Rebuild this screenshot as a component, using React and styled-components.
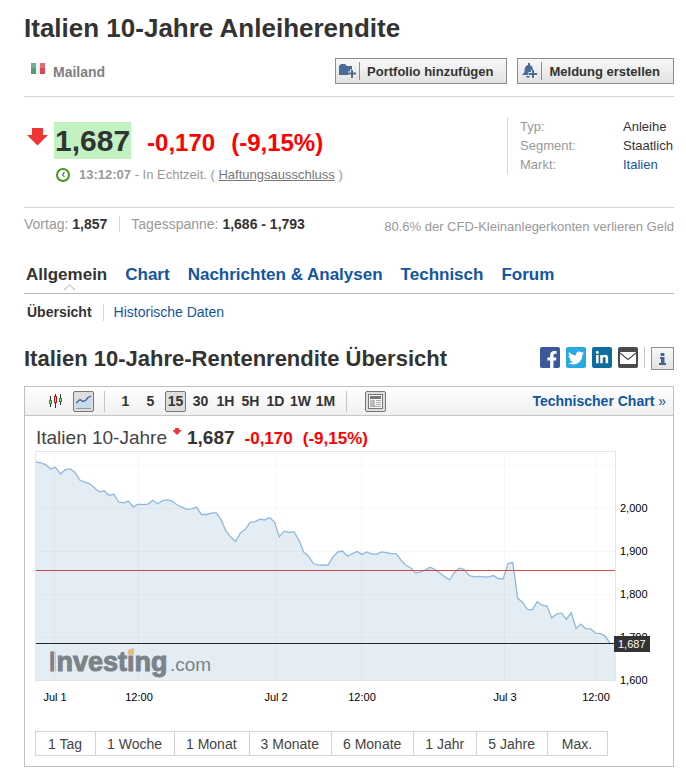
import React, { useState } from 'react'
import styled, { createGlobalStyle } from 'styled-components'
import { FaFacebookF, FaTwitter, FaLinkedinIn } from 'react-icons/fa'

const intervals = ['1', '5', '15', '30', '1H', '5H', '1D', '1W', '1M']
const ranges = ['1 Tag', '1 Woche', '1 Monat', '3 Monate', '6 Monate', '1 Jahr', '5 Jahre', 'Max.']
const tabs = ['Allgemein', 'Chart', 'Nachrichten & Analysen', 'Technisch', 'Forum']

// yields in thousandths
const prices = [
  2107, 2105, 2101, 2091, 2095, 2079, 2089, 2091, 2083, 2065, 2060, 2057, 2047, 2037, 2040,
  2029, 2032, 2014, 2012, 2016, 2002, 2009, 2008, 2009, 2018, 2010, 2017, 2019, 2016, 2007,
  2002, 1997, 1998, 2002, 1985, 1985, 1988, 1989, 1974, 1947, 1933, 1922, 1942, 1950, 1967,
  1968, 1974, 1972, 1978, 1968, 1933, 1946, 1943, 1945, 1926, 1898, 1888, 1871, 1867, 1868,
  1867, 1885, 1898, 1900, 1888, 1894, 1899, 1892, 1898, 1893, 1892, 1898, 1896, 1894, 1894,
  1879, 1867, 1861, 1849, 1851, 1856, 1862, 1857, 1849, 1840, 1833, 1850, 1860, 1857, 1843,
  1840, 1841, 1840, 1840, 1843, 1836, 1835, 1871, 1873, 1790, 1781, 1764, 1763, 1782, 1774,
  1772, 1745, 1753, 1756, 1741, 1757, 1720, 1730, 1719, 1719, 1709, 1708, 1702, 1685, 1685,
]

const yTicks = [
  { price: 2100 },
  { price: 2000, label: '2,000' },
  { price: 1900, label: '1,900' },
  { price: 1800, label: '1,800' },
  { price: 1700, label: '1,700' },
  { price: 1600, label: '1,600' },
]

const xTicks = [
  { x: 29, label: 'Jul 1' },
  { x: 113, label: '12:00' },
  { x: 250, label: 'Jul 2' },
  { x: 336, label: '12:00' },
  { x: 479, label: 'Jul 3' },
  { x: 570, label: '12:00' },
]

const LEFT = 11
const RIGHT = 590
const BOTTOM = 230

const toX = (i) => LEFT + (i * (RIGHT - LEFT)) / (prices.length - 1)
const toY = (price) => 100 + (1900 - price) * 0.43

function YieldChart() {
  const line = prices.map((p, i) => `${toX(i).toFixed(1)},${toY(p).toFixed(1)}`).join(' ')

  return (
    <Plot viewBox="0 0 648 256" role="img" aria-label="Italien 10-Jahre">
      <polygon points={`${LEFT},${BOTTOM} ${line} ${RIGHT},${BOTTOM}`} fill="#e4edf3" />
      <g stroke="#5a6e82" strokeOpacity="0.05">
        {yTicks.map((t) => (
          <line key={t.price} x1={LEFT} x2={RIGHT} y1={Math.round(toY(t.price)) + 0.5} y2={Math.round(toY(t.price)) + 0.5} />
        ))}
        {xTicks.map((t) => (
          <line key={t.x} x1={t.x + 0.5} x2={t.x + 0.5} y1="1" y2={BOTTOM} />
        ))}
      </g>
      <path d="M10.500 230.500V.5H590.500V230.500" fill="none" stroke="#e2e5ea" />
      <polyline points={line} fill="none" stroke="#8fb8de" strokeWidth="1.300" />
      <line x1={LEFT} x2={RIGHT} y1="119.500" y2="119.500" stroke="#d0474d" />
      <line x1={LEFT} x2={RIGHT} y1="192.500" y2="192.500" stroke="#1c2730" />

      <LogoBold x="24" y="220">Investing</LogoBold>
      <LogoLight x="145" y="220">.com</LogoLight>
      <path d="M29.500 200V221" stroke="#e4edf3" strokeWidth="0.800" />
      <path d="M103 199L109 197V203.500H103Z" fill="#e6c07b" />

      {yTicks.map((t) => t.label && (
        <AxisText key={t.price} x="595" y={Math.round(toY(t.price)) + 4}>{t.label}</AxisText>
      ))}
      {xTicks.map((t) => (
        <AxisText key={t.x} x={t.x + 1} y="250" textAnchor="middle">{t.label}</AxisText>
      ))}
      <rect x="589" y="185" width="36" height="16" fill="#333" />
      <AxisText x="593" y="197" $light>1,687</AxisText>
    </Plot>
  )
}

export default function App() {
  const [interval, setActiveInterval] = useState('15')

  return (
    <>
      <GlobalStyle />
      <Page>
        <Title>Italien 10-Jahre Anleiherendite</Title>
        <ExchangeRow>
          <Exchange>
            <svg width="14" height="11" viewBox="0 0 14 11">
              <rect width="5" height="11" fill="#4c9c76" />
              <rect x="5" width="4" height="11" fill="#f2f2f2" />
              <rect x="9" width="5" height="11" fill="#df4750" />
              <rect width="14" height="5" fill="#fff" opacity="0.2" />
            </svg>
            Mailand
          </Exchange>
          <Actions>
            <ActionButton type="button">
              <ActionIcon>
                <svg width="18" height="15" viewBox="0 0 18 15">
                  <path d="M0 2L2 0H6L8 2H13V11H0Z" fill="#4a6c97" />
                  <path d="M9 9.500H17M13 5.500V14" stroke="#f0f0f0" strokeWidth="4" />
                  <path d="M9 9.500H17M13 6V14" stroke="#4a6c97" strokeWidth="2" />
                </svg>
              </ActionIcon>
              Portfolio hinzufügen
            </ActionButton>
            <ActionButton type="button">
              <ActionIcon>
                <svg width="16" height="16" viewBox="0 0 16 16">
                  <path d="M6 0H8V2Q11 3 11 8L13 12H0L2.500 9Q2 3 6 2ZM4 13H8Q7 15 6 15Q5 15 4 13Z" fill="#4a6c97" />
                  <path d="M6.500 11H15M11 7V15.500" stroke="#f0f0f0" strokeWidth="4" />
                  <path d="M7 11H15M11 7V15" stroke="#4a6c97" strokeWidth="2" />
                </svg>
              </ActionIcon>
              Meldung erstellen
            </ActionButton>
          </Actions>
        </ExchangeRow>

        <Quote>
          <div>
            <PriceRow>
              <svg width="21" height="18" viewBox="0 0 21 18">
                <path d="M5 0H16V7H21L10.500 17.500L0 7H5Z" fill="#ef3535" />
              </svg>
              <Price>1,687</Price>
              <Change>-0,170</Change>
              <Change>(-9,15%)</Change>
            </PriceRow>
            <TimeRow>
              <svg width="14" height="14" viewBox="0 0 14 14" fill="none">
                <circle cx="7" cy="7" r="6" stroke="#3f9a22" strokeWidth="2" />
                <path d="M8.500 4L6.500 7L8.500 9" stroke="#333" />
              </svg>
              <span>
                <b>13:12:07</b> - In Echtzeit. ( <NoticeLink href="#haftung">Haftungsausschluss</NoticeLink> )
              </span>
            </TimeRow>
          </div>
          <Facts>
            <dt>Typ:</dt>
            <dd>Anleihe</dd>
            <dt>Segment:</dt>
            <dd>Staatlich</dd>
            <dt>Markt:</dt>
            <dd><a href="#italien">Italien</a></dd>
          </Facts>
        </Quote>

        <DayRow>
          <DayFact>Vortag: <b>1,857</b></DayFact>
          <DayFact>Tagesspanne: <b>1,686 - 1,793</b></DayFact>
          <RiskNote>80.6% der CFD-Kleinanlegerkonten verlieren Geld</RiskNote>
        </DayRow>

        <Tabs>
          {tabs.map((t, i) => (
            <Tab key={t} href="#tab" $active={i === 0}>
              {t}
              {i === 0 && (
                <Caret width="11" height="6" viewBox="0 0 11 6">
                  <path d="M0 6L5.500 1L11 6" fill="#fff" stroke="#aaa" />
                </Caret>
              )}
            </Tab>
          ))}
        </Tabs>
        <SubTabs>
          <SubTab href="#uebersicht" $active>Übersicht</SubTab>
          <SubTab href="#historisch">Historische Daten</SubTab>
        </SubTabs>

        <SectionHead>
          <SectionTitle>Italien 10-Jahre-Rentenrendite Übersicht</SectionTitle>
          <Share>
            <ShareButton type="button" aria-label="Facebook" $color="#3b5998" $low><FaFacebookF size={17} /></ShareButton>
            <ShareButton type="button" aria-label="Twitter" $color="#28a9e2"><FaTwitter size={16} /></ShareButton>
            <ShareButton type="button" aria-label="LinkedIn" $color="#0e6c9f"><FaLinkedinIn size={14} /></ShareButton>
            <ShareButton type="button" aria-label="E-Mail" $color="#4b4b4b">
              <svg width="16" height="12" viewBox="0 0 16 12">
                <rect width="16" height="12" fill="#fff" />
                <path d="M0 1L8 7.500L16 1" fill="none" stroke="#4b4b4b" strokeWidth="1.200" />
              </svg>
            </ShareButton>
            <InfoBox>
              <InfoButton type="button" aria-label="Info">
                <svg width="7" height="12" viewBox="0 0 7 12" fill="#44648e">
                  <rect x="1.500" width="4" height="3" rx="1" />
                  <path d="M1 4H5.500V10H7V12H0V10H2V6H1Z" />
                </svg>
              </InfoButton>
            </InfoBox>
          </Share>
        </SectionHead>

        <Panel>
          <Toolbar>
            <ToolGroup>
              <ToolButton type="button" aria-label="Kerzenchart">
                <svg width="14" height="14" viewBox="0 0 14 14" fill="none">
                  <path d="M2.500 2V13M7.500 0V14M12.500 0V11" stroke="#333" />
                  <rect x="1.500" y="6.500" width="2" height="3" fill="#8fe08f" stroke="#129a22" />
                  <rect x="6.500" y="2.500" width="2" height="6" fill="#f5b0b0" stroke="#b01818" />
                  <rect x="11.500" y="4.500" width="2" height="3" fill="#8fe08f" stroke="#129a22" />
                </svg>
              </ToolButton>
              <ToolButton type="button" aria-label="Flächenchart" $active>
                <svg width="17" height="15" viewBox="0 0 17 15" fill="none">
                  <path d="M1 9L5 5L9 7L16 2V15H1Z" fill="#c8daf0" />
                  <path d="M1 9L5 5.500L8 7.500L11 6L13 3.500L16 2" stroke="#38618e" strokeWidth="1.300" />
                  <path d="M1 14.500H16" stroke="#99a" />
                </svg>
              </ToolButton>
            </ToolGroup>
            <IntervalGroup>
              {intervals.map((v) => (
                <IntervalButton key={v} type="button" $active={v === interval} onClick={() => setActiveInterval(v)}>
                  {v}
                </IntervalButton>
              ))}
            </IntervalGroup>
            <ToolButton type="button" aria-label="Nachrichten" $active>
              <svg width="15" height="15" viewBox="0 0 15 15" fill="none">
                <rect x="0.500" y="0.500" width="14" height="14" fill="#f7f7f7" stroke="#777" />
                <path d="M2 3.500H13" stroke="#777" strokeWidth="3" />
                <rect x="2" y="6" width="5" height="6" fill="#bbb" />
                <path d="M8 6.500H13M8 8.500H13M8 10.500H13M2 12.500H13" stroke="#aaa" />
              </svg>
            </ToolButton>
            <TechLink href="#chart">Technischer Chart <span>»</span></TechLink>
          </Toolbar>

          <Legend>
            Italien 10-Jahre
            <LegendArrow width="8" height="7" viewBox="0 0 8 7">
              <path d="M2 0H6V2H8V3L4 7L0 3V2H2Z" fill="#ef3535" />
            </LegendArrow>
            <LegendPrice>1,687</LegendPrice>
            <LegendChange>-0,170</LegendChange>
            <LegendChange>(-9,15%)</LegendChange>
          </Legend>

          <YieldChart />

          <Ranges>
            {ranges.map((r) => <RangeButton key={r} type="button">{r}</RangeButton>)}
          </Ranges>
        </Panel>
      </Page>
    </>
  )
}

const GlobalStyle = createGlobalStyle`
* {
  box-sizing: border-box;
}

body {
  margin: 0;
  background: #fff;
  color: #333;
  font-family: "Liberation Sans", Arial, sans-serif;
  font-size: 13px;
}

button {
  font-family: inherit;
  color: inherit;
  padding: 0;
  cursor: pointer;
}

a {
  color: #1256a0;
  text-decoration: none;
}
`;

const Page = styled.div`
padding: 12px 12px 12px 24px;
`;

const Title = styled.h1`
margin: 0;
font-size: 26px;
line-height: 32px;
`;

const ExchangeRow = styled.div`
display: flex;
justify-content: space-between;
align-items: center;
margin-top: 14px;
padding-bottom: 12px;
border-bottom: 1px solid #d6d6d6;
`;

const Exchange = styled.div`
display: flex;
align-items: center;
gap: 8px;
padding: 2px 0 0 7px;
color: #7f7f7f;
font-size: 14px;
font-weight: bold;
line-height: 24px;

svg {
  margin-bottom: 8px;
}
`;

const Actions = styled.div`
display: flex;
gap: 10px;
`;

const ActionButton = styled.button`
display: flex;
align-items: center;
height: 26px;
padding-right: 13px;
border: 1px solid #8d8d8d;
background: linear-gradient(#f8f8f8, #e2e2e2);
color: #333;
font-size: 13px;
font-weight: bold;
`;

const ActionIcon = styled.span`
display: flex;
align-items: center;
justify-content: center;
width: 24px;
height: 18px;
margin-right: 7px;
border-right: 1px solid #8d8d8d;
`;

const Quote = styled.div`
display: flex;
justify-content: space-between;
align-items: flex-start;
padding: 20px 0 18px;
border-bottom: 1px solid #d6d6d6;
`;

const PriceRow = styled.div`
display: flex;
align-items: baseline;
gap: 16px;
margin-top: 5px;
padding-left: 3px;

svg {
  align-self: center;
  margin-right: -10px;
  margin-bottom: 10px;
}
`;

const Price = styled.span`
padding: 0 1px;
background: #c2f2c2;
font-size: 30px;
font-weight: bold;
line-height: 37px;
`;

const Change = styled.span`
color: #f00;
font-size: 24px;
font-weight: bold;
line-height: 37px;
`;

const TimeRow = styled.div`
display: flex;
align-items: center;
gap: 9px;
margin-top: 5px;
padding: 0 0 5px 32px;
color: #999;
line-height: 18px;
`;

const NoticeLink = styled.a`
color: #777;
text-decoration: underline;
`;

const Facts = styled.dl`
display: grid;
grid-template-columns: 103px auto;
min-width: 167px;
margin: 0;
padding-left: 12px;
border-left: 1px solid #d6d6d6;
line-height: 19px;

dt {
  color: #999;
}

dd {
  margin: 0;
}
`;

const DayRow = styled.div`
display: flex;
align-items: flex-start;
padding-top: 8px;
color: #999;
`;

const DayFact = styled.span`
font-size: 14px;
line-height: 16px;

b {
  color: #333;
}

& + & {
  margin-left: 12px;
  padding-left: 11px;
  border-left: 1px solid #d6d6d6;
}
`;

const RiskNote = styled.span`
margin-left: auto;
padding-top: 2px;
line-height: 18px;
`;

const Tabs = styled.nav`
display: flex;
gap: 18px;
margin-top: 29px;
padding: 0 2px 8px;
border-bottom: 1px solid #b5b5b5;
`;

const Tab = styled.a`
position: relative;
color: ${(props) => (props.$active ? '#333' : '#1256a0')};
font-size: 17px;
font-weight: bold;
line-height: 20px;
`;

const Caret = styled.svg`
position: absolute;
left: 38px;
top: 19px;
`;

const SubTabs = styled.nav`
display: flex;
align-items: center;
margin-top: 10px;
padding-left: 3px;
`;

const SubTab = styled.a`
color: ${(props) => (props.$active ? '#333' : '#1256a0')};
font-size: 14px;
font-weight: ${(props) => (props.$active ? 'bold' : 'normal')};
line-height: 17px;

& + & {
  margin-left: 11px;
  padding-left: 10px;
  border-left: 1px solid #d6d6d6;
}
`;

const SectionHead = styled.div`
display: flex;
justify-content: space-between;
margin: 26px 0 15px;
`;

const SectionTitle = styled.h2`
margin: 0;
font-size: 22px;
line-height: 24px;
`;

const Share = styled.div`
display: flex;
gap: 6px;
`;

const ShareButton = styled.button`
display: flex;
align-items: ${(props) => (props.$low ? 'flex-end' : 'center')};
justify-content: center;
width: 20px;
height: 21px;
padding-left: ${(props) => (props.$low ? '4px' : '0')};
border: 0;
border-radius: 2px;
background: ${(props) => props.$color};
color: #fff;
`;

const InfoBox = styled.div`
height: 21px;
padding-left: 6px;
border-left: 1px solid #c4c4c4;
`;

const InfoButton = styled.button`
display: flex;
align-items: center;
justify-content: center;
width: 23px;
height: 23px;
border: 1px solid #8d8d8d;
background: linear-gradient(#f8f8f8, #e2e2e2);
`;

const Panel = styled.section`
border: 1px solid #c0c0c0;
padding-bottom: 10px;
`;

const Toolbar = styled.div`
display: flex;
align-items: center;
height: 29px;
padding: 0 7px 0 19px;
border-bottom: 1px solid #c4c4c4;
background: linear-gradient(#fefefe, #f0f0f0);
`;

const ToolGroup = styled.div`
display: flex;
gap: 8px;
`;

const ToolButton = styled.button`
display: flex;
align-items: center;
justify-content: center;
width: 21px;
height: 21px;
border: 1px solid ${(props) => (props.$active ? '#777' : 'transparent')};
border-radius: 2px;
background: ${(props) => (props.$active ? '#dedede' : 'none')};
`;

const IntervalGroup = styled.div`
display: flex;
gap: 4px;
margin: 0 18px 0 10px;
padding: 0 10px;
border: solid #c4c4c4;
border-width: 0 1px;
`;

const IntervalButton = styled(ToolButton)`
font-size: 14px;
font-weight: bold;
`;

const TechLink = styled.a`
margin-left: auto;
font-size: 14px;
font-weight: bold;

span {
  font-weight: normal;
}
`;

const Legend = styled.div`
display: flex;
align-items: baseline;
padding: 10px 11px 0;
color: #444;
font-size: 19px;
line-height: 24px;
`;

const LegendArrow = styled.svg`
align-self: flex-start;
margin: 2px 6px 0;
`;

const LegendPrice = styled.span`
color: #333;
font-weight: bold;
`;

const LegendChange = styled.span`
margin-left: 10px;
color: #f00;
font-size: 17px;
font-weight: bold;
`;

const Plot = styled.svg`
display: block;
width: 100%;
`;

const AxisText = styled.text`
fill: ${(props) => (props.$light ? '#fff' : '#000')};
font-size: 11px;
`;

const LogoBold = styled.text`
fill: #7b8389;
stroke: #7b8389;
stroke-width: 1;
font-size: 27px;
font-weight: bold;
`;

const LogoLight = styled.text`
fill: #7b8389;
font-size: 19px;
`;

const Ranges = styled.div`
display: flex;
margin-top: 24px;
padding-left: 10px;
`;

const RangeButton = styled.button`
min-width: 61px;
height: 25px;
padding: 0 12px 0 11px;
border: 1px solid #d4d4d4;
background: #fff;
color: #444;
font-size: 14px;

& + & {
  margin-left: -1px;
}
`;
